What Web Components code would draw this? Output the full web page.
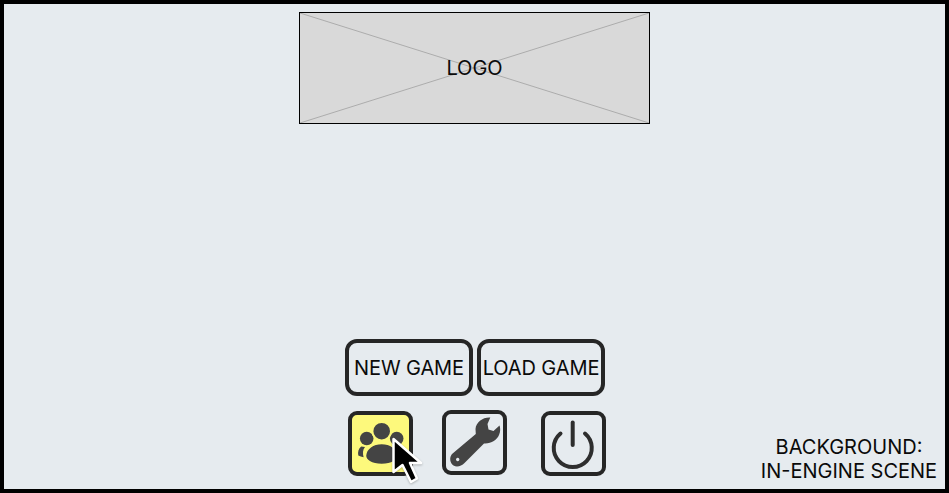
<!DOCTYPE html>
<html><head><meta charset="utf-8">
<style>
html,body{margin:0;padding:0;background:#000}
body{width:949px;height:493px;overflow:hidden;font-family:Inter,"Liberation Sans",sans-serif;color:#0a0a0a}
</style></head><body>
<menu-screen>
  <logo-box slot="top">LOGO</logo-box>
  <text-button>NEW GAME</text-button>
  <text-button>LOAD GAME</text-button>
  <icon-button slot="icons" active><svg viewBox="0 0 65 65" width="65" height="65"><g fill="#444">
    <circle cx="18.7" cy="27.5" r="6.8"/><circle cx="48.7" cy="27.5" r="6.8"/>
    <path d="M13.200 35.500C10.500 37.500 9.600 41 10.300 44.600C11.800 45.200 13.600 45.800 15.600 46.200C14.600 42.600 14.600 38.800 17 36Z"/>
    <path d="M54.200 35.500C56.900 37.500 57.800 41 57.100 44.600C55.600 45.200 53.800 45.800 51.800 46.200C52.800 42.600 52.800 38.800 50.400 36Z"/>
    <circle cx="33.700" cy="20.200" r="9.300" stroke="#fdf97c" stroke-width="2"/>
    <path d="M33.700 32.500C25 32.500 18 37.500 17.500 44.500C17.300 49 23 53.500 33.700 53.500C44.400 53.500 50 49 49.900 44.500C49.400 37.500 42.400 32.500 33.700 32.500Z" stroke="#fdf97c" stroke-width="1.500"/>
  </g></svg><mouse-cursor></mouse-cursor></icon-button>
  <icon-button slot="icons" lift><svg viewBox="0 0 65 65" width="65" height="65"><path fill="#444" fill-rule="evenodd" d="M48.300 7.500C41 7 34 12 33.500 19L33.800 24L10 44C7 47.500 8 53 11.500 55.500C15 57.500 19.500 56 22.500 53L42 33.500C49 34 55 30 57 25C58.500 21.500 58.500 18 57.500 15.500L51.500 21L46.500 19.500L45.500 14ZM15.700 47.800a1.700 1.700 0 1 0 .01 0Z"/></svg></icon-button>
  <icon-button slot="icons" last><svg viewBox="0 0 65 65" width="65" height="65"><g fill="none" stroke="#2e2e2e" stroke-width="4" stroke-linecap="round"><path d="M19.500 22.500A19 19 0 1 0 44 22.500"/><path d="M31.700 11.500V34"/></g></svg></icon-button>
  <scene-note slot="note">BACKGROUND:<br>IN-ENGINE SCENE</scene-note>
</menu-screen>
<script>
function reg(name,css,html){
  customElements.define(name,class extends HTMLElement{
    constructor(){super();this.attachShadow({mode:"open"}).innerHTML="<style>"+css+"</style>"+html;}
  });
}
reg("menu-screen",`
  :host{display:flex;flex-direction:column;align-items:center;position:relative;box-sizing:border-box;width:949px;height:493px;border:4px solid #000;padding-top:8px;background:#e6ebef}
  .bottom{margin-top:auto;display:flex;flex-direction:column;align-items:center;padding-bottom:13px}
  .buttons{display:flex;gap:4px;margin-left:1px}
  .icons{display:flex;align-items:flex-start;gap:29px;margin-top:15px;margin-left:5px;width:258px}
`,`<slot name="top"></slot><div class="bottom"><div class="buttons"><slot></slot></div><div class="icons"><slot name="icons"></slot></div></div><slot name="note"></slot>`);
reg("logo-box",`
  :host{display:flex;align-items:center;justify-content:center;position:relative;box-sizing:border-box;width:351px;height:112px;border:1px solid #000;background:#d9d9d9;font-size:20px;color:#0a0a0a}
  svg{position:absolute;inset:0;width:100%;height:100%}
  span{position:relative}
`,`<svg viewBox="0 0 349 110" preserveAspectRatio="none"><path d="M0 0L349 110M349 0L0 110" stroke="#acacac" stroke-width="1" fill="none"/></svg><span><slot></slot></span>`);
reg("text-button",`
  :host{display:flex;align-items:center;justify-content:center;box-sizing:border-box;width:128px;height:57px;border:4px solid #262626;border-radius:12px;font-size:20px;letter-spacing:-.1px;color:#0a0a0a;white-space:nowrap}
`,`<slot></slot>`);
reg("icon-button",`
  :host{display:block;position:relative;box-sizing:border-box;width:65px;height:65px;border:4px solid #262626;border-radius:9px;flex:none}
  :host([active]){background:#fdf97c}
  :host([lift]){margin-top:-1px}
  :host([last]){margin-left:5px}
  .in{position:absolute;left:-4px;top:-4px;width:65px;height:65px}
`,`<div class="in"><slot></slot></div>`);
reg("mouse-cursor",`
  :host{display:block;position:absolute;left:44px;top:25px;width:34px;height:52px;filter:drop-shadow(0 1px 1px rgba(0,0,0,.25))}
  svg{display:block}
`,`<svg viewBox="0 0 34 52" width="34" height="52"><path d="M1.500 3V36L10.500 29L19 46L25 42.500L18 27H29Z" fill="#000" stroke="#fff" stroke-width="2.500" stroke-linejoin="round"/></svg>`);
reg("scene-note",`
  :host{display:block;position:absolute;right:6px;bottom:6px;width:180px;text-align:center;font-size:20px;line-height:24px;color:#0a0a0a}
`,`<slot></slot>`);
</script>
</body></html>
